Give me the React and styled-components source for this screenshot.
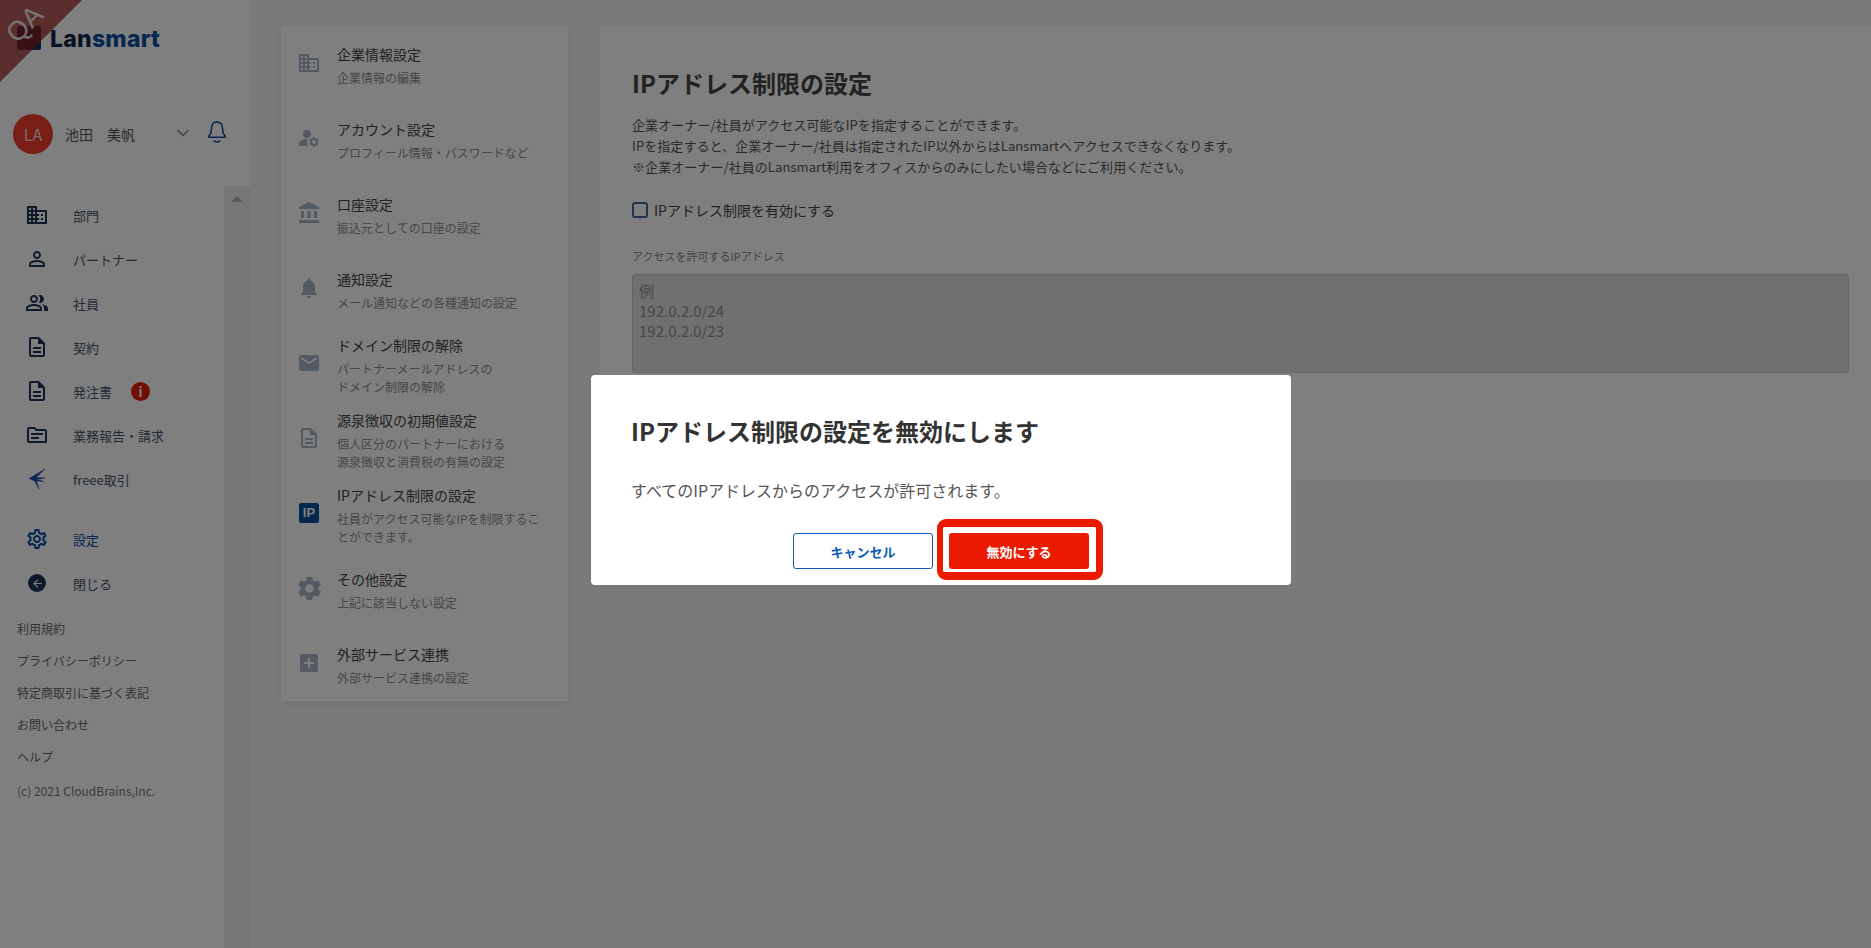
import React from 'react';
import styled, { createGlobalStyle } from 'styled-components';
import {
  MdBusiness,
  MdPersonOutline,
  MdOutlinePeopleAlt,
  MdOutlineDescription,
  MdOutlineTopic,
  MdOutlineSettings,
  MdArrowBack,
  MdManageAccounts,
  MdAccountBalance,
  MdNotifications,
  MdEmail,
  MdSettings,
  MdAddBox,
} from 'react-icons/md';
import { FiChevronDown } from 'react-icons/fi';

const GlobalStyle = createGlobalStyle`
  html, body {
    margin: 0;
    padding: 0;
    background: #f5f5f5;
    font-family: "Noto Sans CJK JP", "Noto Sans", sans-serif;
    overflow: hidden;
  }
  * { box-sizing: border-box; }
`;

const Page = styled.div`
  display: flex;
  width: 1871px;
  height: 948px;
  background: #f5f5f5;
  overflow: hidden;
`;

/* left navigation */
const Sidebar = styled.aside`
  width: 250px;
  flex-shrink: 0;
  display: flex;
  flex-direction: column;
  background: #fff;
  position: relative;
`;

const Ribbon = styled.div`
  position: absolute;
  top: 0;
  left: 0;
  width: 82px;
  height: 82px;
  background: rgba(150, 28, 22, 0.72);
  clip-path: polygon(0 0, 100% 0, 0 100%);
  z-index: 2;
`;

const RibbonText = styled.span`
  position: absolute;
  top: 10px;
  left: 5px;
  font-family: "Liberation Sans", sans-serif;
  font-size: 27px;
  line-height: 28px;
  color: #fff;
  opacity: 0.85;
  transform: rotate(-45deg);
  z-index: 3;
`;

const LogoRow = styled.div`
  height: 76px;
  padding: 26px 0 0 17px;
  display: flex;
  align-items: flex-start;
  gap: 9px;
`;

const LogoMark = styled.div`
  width: 24px;
  height: 24px;
  border-radius: 2px;
  background: #14305e;
`;

const LogoText = styled.div`
  font-family: "Inter", sans-serif;
  font-size: 23px;
  font-weight: 800;
  line-height: 26px;
  color: #12264a;
  letter-spacing: 0.25px;

  span {
    color: #0a4d9c;
  }
`;

const UserRow = styled.div`
  height: 110px;
  padding: 38px 0 0 13px;
  display: flex;
  align-items: flex-start;
`;

const Avatar = styled.div`
  width: 40px;
  height: 40px;
  border-radius: 50%;
  background: #f23c28;
  color: #f4dcd8;
  font-size: 16px;
  display: flex;
  align-items: center;
  justify-content: center;
`;

const UserName = styled.div`
  width: 108px;
  margin-left: 12px;
  font-size: 14px;
  line-height: 40px;
  color: #555;
`;

const Chevron = styled(FiChevronDown)`
  margin-top: 9px;
  width: 20px;
  height: 20px;
  color: #888;
`;

const BellBox = styled.svg`
  margin: 6px 0 0 14px;
  width: 20px;
  height: 24px;
  color: #0a4d9c;
`;

const ScrollArea = styled.div`
  flex: 1;
  display: flex;
  min-height: 0;
`;

const NavColumn = styled.div`
  width: 224px;
  padding-top: 7px;
`;

const ScrollTrack = styled.div`
  width: 26px;
  background: #ececec;
  display: flex;
  justify-content: center;
  padding-top: 10px;
`;

const ScrollArrow = styled.div`
  width: 0;
  height: 0;
  border-left: 6px solid transparent;
  border-right: 6px solid transparent;
  border-bottom: 6px solid #b0b0b0;
`;

const NavItem = styled.div`
  height: 44px;
  display: flex;
  align-items: center;
  padding-left: 25px;
  margin-bottom: ${(p) => (p.$gap ? '16px' : '0')};
  color: ${(p) => (p.$active ? '#0a4d9c' : '#46566e')};
  font-size: 13px;
`;

const NavIcon = styled.div`
  width: 24px;
  height: 24px;
  margin-right: 24px;
  font-size: 24px;
  display: flex;
  align-items: center;
  justify-content: center;
  color: ${(p) => (p.$active ? '#0a4d9c' : '#1d3557')};
`;

const AlertBadge = styled.span`
  width: 19px;
  height: 19px;
  margin-left: 19px;
  border-radius: 50%;
  background: #e01a0a;
  color: #fff;
  font-size: 13px;
  font-weight: 700;
  text-align: center;
  line-height: 19px;
`;

const BackCircle = styled.div`
  width: 18px;
  height: 18px;
  border-radius: 50%;
  background: #1d3557;
  color: #fff;
  font-size: 13px;
  display: flex;
  align-items: center;
  justify-content: center;
`;

const FooterLinks = styled.div`
  margin-top: 8px;
  padding-left: 17px;
`;

const FooterLink = styled.div`
  height: 32px;
  font-size: 12px;
  line-height: 32px;
  color: #666;
`;

const Copyright = styled.div`
  height: 36px;
  font-size: 12px;
  line-height: 36px;
  color: #777;
`;

/* content */
const Content = styled.main`
  flex: 1;
  display: flex;
  align-items: flex-start;
  padding: 26px 0 0 31px;
  gap: 32px;
`;

const SettingsMenu = styled.nav`
  width: 287px;
  flex-shrink: 0;
  background: #fff;
  box-shadow: 0 2px 8px rgba(0, 0, 0, 0.08);
`;

const MenuItem = styled.div`
  height: 75px;
  display: flex;
  align-items: center;
  padding: 4px 24px 0 0;
`;

const MenuIcon = styled.div`
  width: 56px;
  margin-top: -5px;
  flex-shrink: 0;
  font-size: ${(p) => p.$size || 24}px;
  color: #a9b4c4;
  display: flex;
  align-items: center;
  justify-content: center;
`;

const IpIcon = styled.div`
  width: 20px;
  height: 20px;
  border-radius: 2px;
  background: #0a4d9c;
  color: #fff;
  font-family: "Liberation Sans", sans-serif;
  font-size: 13px;
  font-weight: 700;
  line-height: 20px;
  text-align: center;
`;

const MenuTitle = styled.div`
  font-size: 14px;
  line-height: 21px;
  color: #444;
  margin-bottom: 4px;
`;

const MenuSub = styled.div`
  font-size: 12px;
  line-height: 18px;
  color: #8e8e8e;
`;

const MainPanel = styled.section`
  flex: 1;
  height: 454px;
  background: #fff;
  padding: 39px 22px 0 32px;
`;

const PanelTitle = styled.h1`
  margin: 0 0 13px;
  font-size: 24px;
  font-weight: 700;
  line-height: 36px;
  color: #444;
`;

const Description = styled.p`
  margin: 0 0 23px;
  font-size: 13px;
  line-height: 21px;
  letter-spacing: 0.07px;
  color: #555;
`;

const CheckRow = styled.label`
  display: flex;
  align-items: center;
  gap: 6px;
  height: 20px;
  font-size: 14px;
  color: #444;
  margin-bottom: 28px;
`;

const CheckBox = styled.span`
  width: 16px;
  height: 16px;
  border-radius: 3px;
  border: 2px solid #4a6a90;
  background: #fff;
`;

const FieldLabel = styled.div`
  font-size: 11px;
  line-height: 16px;
  color: #888;
  margin-bottom: 10px;
`;

const FakeTextarea = styled.div`
  height: 99px;
  border: 1px solid #ccc;
  border-radius: 3px;
  background: #e0e0e0;
  padding: 6px;
  font-size: 15px;
  line-height: 20px;
  color: #909090;
`;

/* modal */
const Overlay = styled.div`
  position: fixed;
  inset: 0;
  background: rgba(0, 0, 0, 0.5);
  display: flex;
  align-items: center;
  justify-content: center;
  padding: 12px 0 0 11px;
  z-index: 10;
`;

const Modal = styled.div`
  width: 700px;
  height: 210px;
  background: #fff;
  border-radius: 4px;
  padding: 38px 40px 0;
`;

const ModalTitle = styled.h2`
  margin: 0 0 29px;
  font-size: 24px;
  font-weight: 700;
  line-height: 36px;
  color: #333;
`;

const ModalBody = styled.p`
  margin: 0 0 17px;
  font-size: 16px;
  line-height: 24px;
  color: #555;
`;

const ButtonRow = styled.div`
  display: flex;
  align-items: flex-start;
  gap: 4px;
  margin-left: 162px;
`;

const CancelButton = styled.button`
  width: 140px;
  height: 36px;
  margin-top: 14px;
  border: 1px solid #0a5cb8;
  border-radius: 3px;
  background: #fff;
  color: #0a5cb8;
  font-family: inherit;
  font-size: 13px;
  font-weight: 700;
`;

const FocusRing = styled.div`
  padding: 6px 7px 3px 6px;
  border: solid #ec1a00;
  border-width: 8px 7px 8px 6px;
  border-radius: 9px;
  background: #fff;
`;

const DangerButton = styled.button`
  display: block;
  width: 140px;
  height: 36px;
  border: none;
  border-radius: 3px;
  background: #ec1a00;
  color: #fff;
  font-family: inherit;
  font-size: 13px;
  font-weight: 700;
`;

function FreeeIcon() {
  return (
    <svg width="18" height="22" viewBox="0 0 18 22" fill="#1f4fb0" stroke="#1f4fb0" strokeWidth="0.5">
      <path d="M1 10.500 L17 1 L8 9.500 L17 10 L8.500 11.500 L16 13.500 L8.500 13 L11 21 L6.500 13 Z" />
    </svg>
  );
}

const navItems = [
  { label: '部門', icon: <MdBusiness /> },
  { label: 'パートナー', icon: <MdPersonOutline /> },
  { label: '社員', icon: <MdOutlinePeopleAlt /> },
  { label: '契約', icon: <MdOutlineDescription /> },
  { label: '発注書', icon: <MdOutlineDescription />, alert: true },
  { label: '業務報告・請求', icon: <MdOutlineTopic /> },
  { label: 'freee取引', icon: <FreeeIcon />, gap: true },
  { label: '設定', icon: <MdOutlineSettings />, active: true },
  { label: '閉じる', icon: <BackCircle><MdArrowBack /></BackCircle> },
];

const menuItems = [
  { title: '企業情報設定', sub: ['企業情報の編集'], icon: <MdBusiness /> },
  { title: 'アカウント設定', sub: ['プロフィール情報・パスワードなど'], icon: <MdManageAccounts /> },
  { title: '口座設定', sub: ['振込元としての口座の設定'], icon: <MdAccountBalance /> },
  { title: '通知設定', sub: ['メール通知などの各種通知の設定'], icon: <MdNotifications /> },
  { title: 'ドメイン制限の解除', sub: ['パートナーメールアドレスの', 'ドメイン制限の解除'], icon: <MdEmail /> },
  { title: '源泉徴収の初期値設定', sub: ['個人区分のパートナーにおける', '源泉徴収と消費税の有無の設定'], icon: <MdOutlineDescription /> },
  { title: 'IPアドレス制限の設定', sub: ['社員がアクセス可能なIPを制限するこ', 'とができます。'], icon: <IpIcon>IP</IpIcon> },
  { title: 'その他設定', sub: ['上記に該当しない設定'], icon: <MdSettings />, size: 29 },
  { title: '外部サービス連携', sub: ['外部サービス連携の設定'], icon: <MdAddBox /> },
];

const footerLinks = ['利用規約', 'プライバシーポリシー', '特定商取引に基づく表記', 'お問い合わせ', 'ヘルプ'];

const App = () => (
  <>
    <GlobalStyle />
    <Page>
      <Sidebar>
        <Ribbon />
        <RibbonText>QA</RibbonText>
        <LogoRow>
          <LogoMark />
          <LogoText>Lan<span>smart</span></LogoText>
        </LogoRow>
        <UserRow>
          <Avatar>LA</Avatar>
          <UserName>池田　美帆</UserName>
          <Chevron />
          <BellBox viewBox="0 0 24 28" fill="none" stroke="currentColor" strokeWidth="1.8">
            <path d="M12 2c-4.500 0-6.600 3.400-6.600 7.400 0 5-1.400 7.600-3.200 9.400v1.400h19.600v-1.400c-1.800-1.800-3.200-4.400-3.200-9.400C18.600 5.400 16.500 2 12 2z" />
            <path d="M8 24c1 1.500 2.400 2 4 2s3-.5 4-2" />
          </BellBox>
        </UserRow>
        <ScrollArea>
          <NavColumn>
            {navItems.map((item) => (
              <NavItem key={item.label} $active={item.active} $gap={item.gap}>
                <NavIcon $active={item.active}>{item.icon}</NavIcon>
                {item.label}
                {item.alert && <AlertBadge>i</AlertBadge>}
              </NavItem>
            ))}
            <FooterLinks>
              {footerLinks.map((link) => (
                <FooterLink key={link}>{link}</FooterLink>
              ))}
              <Copyright>(c) 2021 CloudBrains,Inc.</Copyright>
            </FooterLinks>
          </NavColumn>
          <ScrollTrack>
            <ScrollArrow />
          </ScrollTrack>
        </ScrollArea>
      </Sidebar>
      <Content>
        <SettingsMenu>
          {menuItems.map((item) => (
            <MenuItem key={item.title}>
              <MenuIcon $size={item.size}>{item.icon}</MenuIcon>
              <div>
                <MenuTitle>{item.title}</MenuTitle>
                {item.sub.map((line) => (
                  <MenuSub key={line}>{line}</MenuSub>
                ))}
              </div>
            </MenuItem>
          ))}
        </SettingsMenu>
        <MainPanel>
          <PanelTitle>IPアドレス制限の設定</PanelTitle>
          <Description>
            企業オーナー/社員がアクセス可能なIPを指定することができます。<br />
            IPを指定すると、企業オーナー/社員は指定されたIP以外からはLansmartへアクセスできなくなります。<br />
            ※企業オーナー/社員のLansmart利用をオフィスからのみにしたい場合などにご利用ください。
          </Description>
          <CheckRow>
            <CheckBox />
            IPアドレス制限を有効にする
          </CheckRow>
          <FieldLabel>アクセスを許可するIPアドレス</FieldLabel>
          <FakeTextarea>
            例<br />
            192.0.2.0/24<br />
            192.0.2.0/23
          </FakeTextarea>
        </MainPanel>
      </Content>
    </Page>
    <Overlay>
      <Modal>
        <ModalTitle>IPアドレス制限の設定を無効にします</ModalTitle>
        <ModalBody>すべてのIPアドレスからのアクセスが許可されます。</ModalBody>
        <ButtonRow>
          <CancelButton>キャンセル</CancelButton>
          <FocusRing>
            <DangerButton>無効にする</DangerButton>
          </FocusRing>
        </ButtonRow>
      </Modal>
    </Overlay>
  </>
);

export default App;
